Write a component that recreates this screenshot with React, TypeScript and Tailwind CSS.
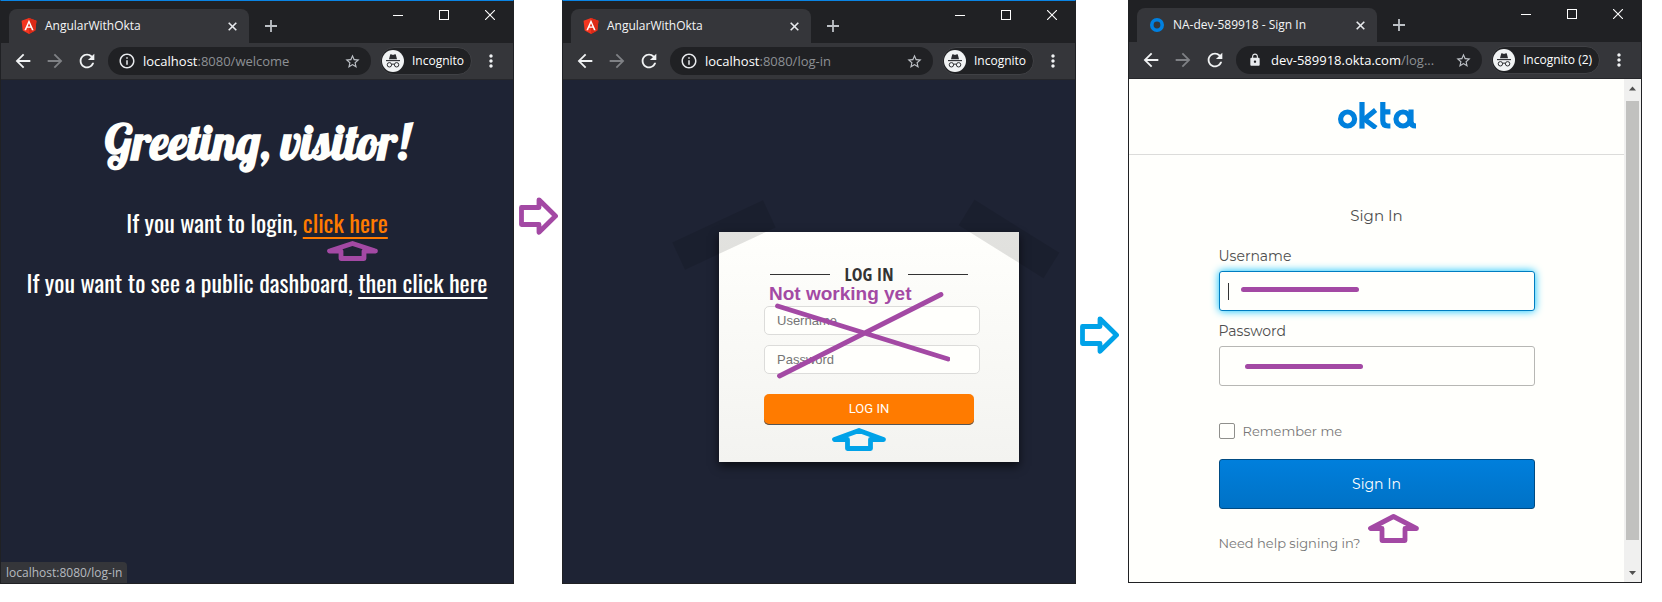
import type { ReactNode } from "react";
import {
  MdArrowBack,
  MdArrowForward,
  MdInfoOutline,
  MdLock,
  MdMoreVert,
  MdRefresh,
  MdStarBorder,
} from "react-icons/md";

const PURPLE = "#a349a4";
const CYAN = "#00a2e8";

function AngularLogo() {
  return (
    <svg viewBox="31 30 188 200" className="h-4 w-4" aria-hidden="true">
      <polygon fill="#f4351f" points="125,30 31.9,63.2 46.1,186.3 125,230 203.9,186.3 218.1,63.2" />
      <polygon fill="#dc2a17" points="125,30 125,230 203.9,186.3 218.1,63.2" />
      <path
        fill="#fff"
        d="M125 52.1L66.8 182.6h21.7l11.7-29.2h49.4l11.7 29.2h21.7L125 52.1zM142 135.4H108l17-40.9z"
      />
    </svg>
  );
}

function RingLogo() {
  return (
    <svg viewBox="0 0 16 16" className="h-4 w-4" aria-hidden="true">
      <circle cx="8" cy="8" r="5.2" fill="none" stroke="#0080e0" strokeWidth="3.6" />
    </svg>
  );
}

function OktaLogo() {
  return (
    <svg viewBox="0 0 78 27" className="h-[27px] w-[78px]" role="img" aria-label="okta">
      <g fill="none" stroke="#0080dc" strokeWidth="5.2">
        <circle cx="9.6" cy="17" r="7" />
        <path d="M24 0V26.6" />
        <path d="M37.6 8L26.4 17.2L38 26" strokeWidth="5" />
        <path d="M44.8 0V18.6Q44.8 24 50.2 24H52.4M44.8 9.8H52.4" />
        <circle cx="65" cy="17" r="7" />
        <path d="M73 7.6V19.5Q73 24 78 24" />
      </g>
    </svg>
  );
}

function IncognitoBadge() {
  return (
    <svg viewBox="0 0 22 22" className="h-[22px] w-[22px] shrink-0" aria-hidden="true">
      <circle cx="11" cy="11" r="11" fill="#f1f3f4" />
      <path d="M7 9.2L8.2 4.4Q9.4 4.2 11 4.9Q12.6 4.2 13.8 4.4L15 9.2Z" fill="#2b2c30" />
      <path d="M4 10.6H18" stroke="#2b2c30" strokeWidth="1.1" />
      <g fill="none" stroke="#2b2c30" strokeWidth="1">
        <circle cx="7.4" cy="14.8" r="2.2" />
        <circle cx="14.6" cy="14.8" r="2.2" />
        <path d="M9.6 14.4Q11 13.6 12.4 14.4" />
      </g>
    </svg>
  );
}

function RightArrow({ color }: { color: string }) {
  return (
    <svg viewBox="0 0 39 38" className="h-[38px] w-[39px]" aria-hidden="true">
      <path
        d="M2.5 10.5H20V2.8L36.5 19L20 35.2V27.5H2.5Z"
        fill="none"
        stroke={color}
        strokeWidth="4.8"
        strokeLinejoin="round"
      />
    </svg>
  );
}

function UpArrow({ width, height, color }: { width: number; height: number; color: string }) {
  const shoulder = height / 2;
  const c = width / 2;
  return (
    <svg width={width} height={height} viewBox={`0 0 ${width} ${height}`} aria-hidden="true">
      <path
        d={`M${c} 2.5L2.5 ${shoulder}H${c - 11.5}V${height - 2.5}H${c + 11.5}V${shoulder}H${width - 2.5}Z`}
        fill="none"
        stroke={color}
        strokeWidth="4.8"
        strokeLinejoin="round"
      />
    </svg>
  );
}

function Strike() {
  return (
    <svg viewBox="0 0 118 5" className="h-[5px] w-[118px]" aria-hidden="true">
      <path d="M2.5 2.5H115.5" stroke={PURPLE} strokeWidth="5" strokeLinecap="round" />
    </svg>
  );
}

type BrowserProps = {
  className: string;
  icon: ReactNode;
  title: string;
  secure?: boolean;
  host: string;
  path: string;
  badge: string;
  badgeClass: string;
  children: ReactNode;
};

function Browser({ className, icon, title, secure, host, path, badge, badgeClass, children }: BrowserProps) {
  return (
    <section
      className={`flex min-w-0 flex-1 flex-col border-x border-b border-[#202124] bg-[#202124] font-['Open_Sans','Noto_Sans',sans-serif] ${className}`}
    >
      <header>
        <div className="flex h-[42px] pl-2">
          <div className="mt-2 flex w-60 items-center rounded-t-lg bg-[#35363a] pr-3 pl-3">
            {icon}
            <span className="ml-2 flex-1 text-[12px] leading-4 whitespace-nowrap text-[#f4f5f6]">{title}</span>
            <button type="button" aria-label="Close tab" className="text-[#e8eaed]">
              <svg viewBox="0 0 9 9" className="h-[9px] w-[9px]">
                <path d="M.7 .7L8.3 8.3M8.3 .7L.7 8.3" stroke="currentColor" strokeWidth="1.6" />
              </svg>
            </button>
          </div>
          <button type="button" aria-label="New tab" className="mt-2 ml-4 text-[#bdc1c6]">
            <svg viewBox="0 0 12 12" className="h-3 w-3">
              <path d="M6 0V12M0 6H12" stroke="currentColor" strokeWidth="1.8" />
            </svg>
          </button>
          <div className="ml-auto flex items-start gap-9 pt-[9px] pr-[18px] text-white">
            <button type="button" aria-label="Minimize">
              <svg viewBox="0 0 10 10" className="h-2.5 w-2.5">
                <path d="M0 5.5H10" stroke="currentColor" />
              </svg>
            </button>
            <button type="button" aria-label="Maximize">
              <svg viewBox="0 0 10 10" className="h-2.5 w-2.5">
                <rect x=".5" y=".5" width="9" height="9" fill="none" stroke="currentColor" />
              </svg>
            </button>
            <button type="button" aria-label="Close">
              <svg viewBox="0 0 10 10" className="h-2.5 w-2.5">
                <path d="M0 0L10 10M10 0L0 10" stroke="currentColor" strokeWidth="1.1" />
              </svg>
            </button>
          </div>
        </div>
        <div className="flex h-[37px] items-center border-b border-[#26272b] bg-[#35363a] pr-3 pl-[11px]">
          <div className="flex gap-2.5">
            <button type="button" aria-label="Back" className="text-[#f1f3f4]">
              <MdArrowBack size={22} />
            </button>
            <button type="button" aria-label="Forward" className="text-[#7f8185]">
              <MdArrowForward size={22} />
            </button>
            <button type="button" aria-label="Reload" className="text-[#f1f3f4]">
              <MdRefresh size={22} />
            </button>
          </div>
          <div className="ml-[10px] flex h-7 min-w-0 flex-1 items-center rounded-full bg-[#202124] pr-2.5 pl-2.5">
            <span className="flex w-[18px] shrink-0 justify-center text-[#e8eaed]">
              {secure ? <MdLock size={14} /> : <MdInfoOutline size={18} />}
            </span>
            <span className="ml-[7px] min-w-0 flex-1 text-[13px] leading-5 whitespace-nowrap text-[#8d9094]">
              <span className="text-white">{host}</span>
              {path}
            </span>
            <button type="button" aria-label="Bookmark" className="ml-3 shrink-0 text-[#bdc1c6]">
              <MdStarBorder size={17} />
            </button>
          </div>
          <button
            type="button"
            className={`ml-[9px] flex h-7 shrink-0 items-center rounded-full border border-[#404145] bg-[#202124] pl-px text-[12px] whitespace-nowrap text-white ${badgeClass}`}
          >
            <IncognitoBadge />
            <span className="ml-2">{badge}</span>
          </button>
          <button type="button" aria-label="Menu" className="ml-[9px] text-[#f1f3f4]">
            <MdMoreVert size={20} />
          </button>
        </div>
      </header>
      {children}
    </section>
  );
}

function WelcomePage() {
  return (
    <main className="relative flex-1 bg-[#1e2334] text-center font-['Oswald','Roboto_Condensed','Liberation_Sans_Narrow',sans-serif] text-[24px] leading-9 text-[#fffffc]">
      <h1 className="pt-[30px] font-['Lobster','Liberation_Serif',serif] text-[48px] leading-[64px] font-bold">
        Greeting, visitor!
      </h1>
      <p className="mt-[30px]">
        If you want to login,{" "}
        <span className="relative inline-block">
          <a href="#log-in" className="text-[#ff7b00] underline decoration-2 underline-offset-4">
            click here
          </a>
          <span className="absolute top-[37px] left-6 flex">
            <UpArrow width={51} height={20} color={PURPLE} />
          </span>
        </span>
      </p>
      <p className="mt-6">
        If you want to see a public dashboard,{" "}
        <a href="#dashboard" className="underline decoration-2 underline-offset-4">
          then click here
        </a>
      </p>
      <div className="absolute bottom-0 left-0 rounded-tr bg-[#35363a] px-[5px] font-['Open_Sans','Noto_Sans',sans-serif] text-[12px] leading-[21px] text-[#b6bac0]">
        localhost:8080/log-in
      </div>
    </main>
  );
}

function LogInPage() {
  const field =
    "block h-[29px] w-full rounded-[5px] border border-[#dcdcda] bg-[#fffffc] px-3 text-[13px] text-[#333] placeholder:text-[#757575]";
  return (
    <main className="flex flex-1 items-start justify-center bg-[#1e2334] pt-[152px] pl-[100px] font-['Liberation_Sans',sans-serif]">
      <div className="relative w-[300px] bg-linear-to-b from-[#fffffc] to-[#f3f3f0] shadow-[0_4px_9px_rgba(0,0,0,0.65)]">
        <span className="absolute -top-3 -left-[45px] h-[30px] w-[100px] -rotate-[25deg] bg-black/[0.115]" />
        <span className="absolute -top-2 left-60 h-[30px] w-[100px] rotate-[32deg] bg-black/[0.115]" />
        <form className="pt-[30px] pr-[39px] pb-[37px] pl-[45px]">
          <h2 className="mr-3 ml-1.5 flex items-center justify-between font-['Open_Sans_Condensed','Roboto_Condensed','Liberation_Sans_Narrow',sans-serif] text-[18px] leading-6 font-bold text-[#333]">
            <span className="h-px w-[60px] bg-[#333]" />
            LOG IN
            <span className="h-px w-[60px] bg-[#333]" />
          </h2>
          <input aria-label="Username" placeholder="Username" className={`mt-5 ${field}`} />
          <input aria-label="Password" type="password" placeholder="Password" className={`mt-2.5 ${field}`} />
          <button
            type="button"
            className="mt-5 h-[31px] w-[210px] rounded-[5px] bg-[#ff7b00] pb-0.5 font-['Roboto',sans-serif] text-[13px] text-[#fffffc] shadow-[inset_0_-1px_0_#555]"
          >
            LOG IN
          </button>
        </form>
        <p className="absolute top-[50px] left-[50px] text-[19px] leading-6 font-bold whitespace-nowrap text-[#a349a4]">
          Not working yet
        </p>
        <svg viewBox="0 0 176 90" className="absolute top-[59px] left-[55px] h-[90px] w-[176px]" aria-hidden="true">
          <path
            d="M3.5 15L174 68M5.5 85L167 3.5"
            stroke={PURPLE}
            strokeWidth="4.8"
            strokeLinecap="round"
          />
        </svg>
        <span className="absolute top-[196px] left-[113px] flex">
          <UpArrow width={54} height={23} color={CYAN} />
        </span>
      </div>
    </main>
  );
}

function OktaPage() {
  return (
    <div className="flex bg-[#fffffc] font-['Montserrat','Lato',sans-serif] text-[#4e4e4e]">
      <main className="flex-1">
        <div className="flex h-[76px] justify-center border-b border-[#dcdcda] pt-[23px]">
          <OktaLogo />
        </div>
        <form className="mx-auto w-[316px] pt-[49px] pb-[29px]">
          <h1 className="text-center text-[15px] leading-6">Sign In</h1>
          <label htmlFor="okta-user" className="mt-[18px] block text-[14px] leading-5">
            Username
          </label>
          <div className="relative mt-[5px]">
            <input
              id="okta-user"
              className="block h-10 w-full rounded-[3px] border border-[#007dc1] bg-[#fffffc] px-2 shadow-[0_0_8px_#00c0ff]"
            />
            <span className="absolute top-3 left-[9px] h-[17px] w-px bg-[#333]" />
            <span className="absolute top-4 left-[22px] flex">
              <Strike />
            </span>
          </div>
          <label htmlFor="okta-pass" className="mt-2.5 block text-[14px] leading-5">
            Password
          </label>
          <div className="relative mt-[5px]">
            <input
              id="okta-pass"
              type="password"
              className="block h-10 w-full rounded-[3px] border border-[#b7b7b4] bg-[#fffffc] px-2"
            />
            <span className="absolute top-[18px] left-[26px] flex">
              <Strike />
            </span>
          </div>
          <div className="mt-[35px] flex h-5 items-center text-[#777]">
            <input
              id="remember"
              type="checkbox"
              className="h-4 w-4 appearance-none rounded-[2px] border border-[#8f8f8c] bg-[#fffffc]"
            />
            <label htmlFor="remember" className="ml-2 text-[13px] leading-5">
              Remember me
            </label>
          </div>
          <div className="relative mt-[18px]">
            <button
              type="button"
              className="block h-[50px] w-full rounded-[3px] border border-[#004b83] bg-linear-to-b from-[#007fdc] to-[#0072c6] text-[14px] text-white"
            >
              Sign In
            </button>
            <span className="absolute top-[55px] left-[149px] flex">
              <UpArrow width={51} height={29} color={PURPLE} />
            </span>
          </div>
          <a href="#help" className="mt-6 block text-[13px] leading-5 text-[#777]">
            Need help signing in?
          </a>
        </form>
      </main>
      <div className="flex w-[17px] flex-col items-center bg-[#f0f0ef]">
        <svg viewBox="0 0 17 22" className="h-[22px] w-[17px]" aria-hidden="true">
          <path d="M5 11.5H12L8.5 7.5Z" fill="#505050" />
        </svg>
        <span className="w-[13px] flex-1 bg-[#c1c1bf]" />
        <svg viewBox="0 0 17 42" className="h-[42px] w-[17px]" aria-hidden="true">
          <path d="M5 31H12L8.5 35Z" fill="#505050" />
        </svg>
      </div>
    </div>
  );
}

export default function App() {
  return (
    <div className="min-h-screen bg-white">
      <div className="flex items-stretch pr-5">
        <Browser
          className="border-t border-t-[#0a84e4]"
          icon={<AngularLogo />}
          title="AngularWithOkta"
          host="localhost"
          path=":8080/welcome"
          badge="Incognito"
          badgeClass="w-[92px]"
        >
          <WelcomePage />
        </Browser>
        <div className="flex w-12 shrink-0 justify-center pt-[197px]">
          <RightArrow color={PURPLE} />
        </div>
        <Browser
          className="border-t border-t-[#0a84e4]"
          icon={<AngularLogo />}
          title="AngularWithOkta"
          host="localhost"
          path=":8080/log-in"
          badge="Incognito"
          badgeClass="w-[92px]"
        >
          <LogInPage />
        </Browser>
        <div className="flex w-[52px] shrink-0 pt-[316px] pl-1">
          <RightArrow color={CYAN} />
        </div>
        <Browser
          className="mb-px"
          icon={<RingLogo />}
          title="NA-dev-589918 - Sign In"
          secure
          host="dev-589918.okta.com"
          path="/log..."
          badge="Incognito (2)"
          badgeClass="w-[109px]"
        >
          <OktaPage />
        </Browser>
      </div>
    </div>
  );
}
